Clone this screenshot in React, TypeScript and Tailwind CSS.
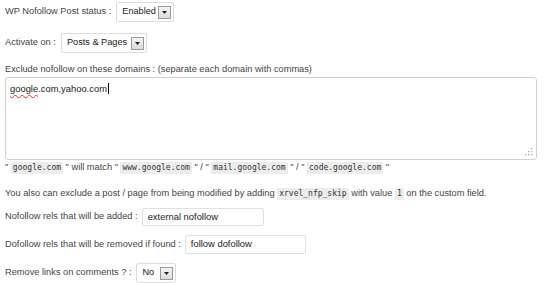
import React from "react";

const sans = { fontFamily: '"Liberation Sans", Arial, sans-serif' };
const mono = { fontFamily: '"DejaVu Sans Mono", "Liberation Mono", monospace' };

function Arrow() {
  return (
    <span className="ml-auto flex h-[13px] w-[13px] shrink-0 items-center justify-center border border-[#9a9a9a] bg-gradient-to-b from-[#f4f4f4] to-[#dcdcdc]">
      <svg width="5" height="3" viewBox="0 0 5 3">
        <polygon points="0,0 5,0 2.5,3" fill="#222" />
      </svg>
    </span>
  );
}

function Select({ value, w }: { value: string; w: string }) {
  return (
    <div className={`ml-[5px] flex h-[20px] items-center whitespace-nowrap rounded-[2px] border border-[#dcdcdc] bg-white pl-[5px] pr-[2px] text-[#222] ${w}`}>
      <span className="text-[9.2px]">{value}</span>
      <Arrow />
    </div>
  );
}

function Input({ value, w, h }: { value: string; w: string; h: string }) {
  return (
    <div className={`ml-[4px] flex items-center rounded-[2px] border border-[#e0e0e0] bg-white pl-[5px] text-[9.4px] text-[#222] ${w} ${h}`}>
      {value}
    </div>
  );
}

function Code({ children }: { children: React.ReactNode }) {
  return (
    <code className="bg-[#ececec] px-[2px] text-[8px] text-[#333]" style={mono}>
      {children}
    </code>
  );
}

export default function App() {
  return (
    <div className="h-[283px] w-[550px] overflow-hidden bg-white px-[5px] pt-[2px] text-[9.25px] text-[#444]" style={sans}>
      <div className="flex h-[20px] items-center">
        <span>WP Nofollow Post status :</span>
        <Select value="Enabled" w="w-[58px]" />
      </div>
      <div className="mt-[11px] flex h-[20px] items-center">
        <span>Activate on :</span>
        <Select value="Posts & Pages" w="w-[86px]" />
      </div>
      <div className="mt-[11px] flex h-[12px] items-center">
        Exclude nofollow on these domains : (separate each domain with commas)
      </div>
      <div className="relative mt-[1px] h-[83px] w-[532px] rounded-[3px] border border-[#cfcfcf] bg-white px-[4px] pt-[3px] text-[9.4px] text-[#222]">
        <span className="underline decoration-[#d33] decoration-wavy decoration-[1px] underline-offset-2">google</span>
        <span>.com,yahoo.com</span>
        <span className="ml-[1px] inline-block h-[11px] w-[1px] translate-y-[2px] bg-black" />
        <svg className="absolute bottom-[3px] right-[3px]" width="8" height="8" viewBox="0 0 8 8">
          <rect x="6" y="0" width="1.3" height="1.3" fill="#aaa" />
          <rect x="3" y="3" width="1.3" height="1.3" fill="#aaa" />
          <rect x="6" y="3" width="1.3" height="1.3" fill="#aaa" />
          <rect x="0" y="6" width="1.3" height="1.3" fill="#aaa" />
          <rect x="3" y="6" width="1.3" height="1.3" fill="#aaa" />
          <rect x="6" y="6" width="1.3" height="1.3" fill="#aaa" />
        </svg>
      </div>
      <div className="mt-[1px] flex h-[14px] items-center whitespace-pre">
        " <Code>google.com</Code> " will match " <Code>www.google.com</Code> " / " <Code>mail.google.com</Code> " / " <Code>code.google.com</Code> "
      </div>
      <div className="mt-[12px] flex h-[14px] items-center whitespace-pre">
        You also can exclude a post / page from being modified by adding <Code>xrvel_nfp_skip</Code> with value <Code>1</Code> on the custom field.
      </div>
      <div className="mt-[7px] flex h-[18px] items-center">
        <span>Nofollow rels that will be added :</span>
        <Input value="external nofollow" w="w-[122px]" h="h-[18px]" />
      </div>
      <div className="mt-[9px] flex h-[19px] items-center">
        <span>Dofollow rels that will be removed if found :</span>
        <Input value="follow dofollow" w="w-[121px]" h="h-[19px]" />
      </div>
      <div className="mt-[9px] flex h-[20px] items-center">
        <span>Remove links on comments ? :</span>
        <Select value="No" w="w-[40px]" />
      </div>
    </div>
  );
}
